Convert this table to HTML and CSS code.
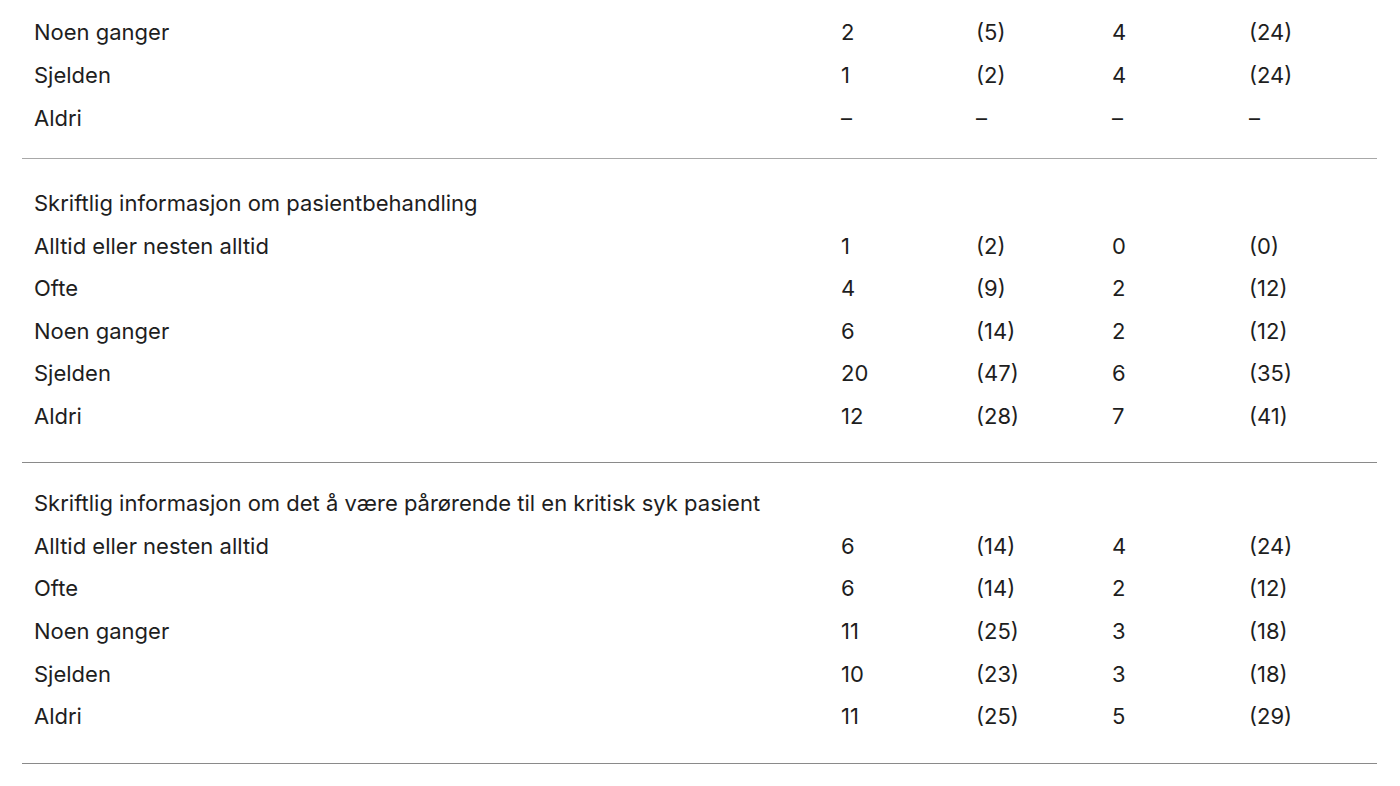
FILE: index.html
```html
<!DOCTYPE html>
<html lang="no">
<head>
<meta charset="utf-8">
<title>Tabell</title>
<link rel="stylesheet" href="styles.css">
</head>
<body>
<div class="table">
  <div class="section section-first">
    <div class="row"><span class="label">Noen ganger</span><span>2</span><span>(5)</span><span>4</span><span>(24)</span></div>
    <div class="row"><span class="label">Sjelden</span><span>1</span><span>(2)</span><span>4</span><span>(24)</span></div>
    <div class="row"><span class="label">Aldri</span><span>–</span><span>–</span><span>–</span><span>–</span></div>
  </div>
  <div class="section">
    <div class="row"><span class="label heading">Skriftlig informasjon om pasientbehandling</span></div>
    <div class="row"><span class="label">Alltid eller nesten alltid</span><span>1</span><span>(2)</span><span>0</span><span>(0)</span></div>
    <div class="row"><span class="label">Ofte</span><span>4</span><span>(9)</span><span>2</span><span>(12)</span></div>
    <div class="row"><span class="label">Noen ganger</span><span>6</span><span>(14)</span><span>2</span><span>(12)</span></div>
    <div class="row"><span class="label">Sjelden</span><span>20</span><span>(47)</span><span>6</span><span>(35)</span></div>
    <div class="row"><span class="label">Aldri</span><span>12</span><span>(28)</span><span>7</span><span>(41)</span></div>
  </div>
  <div class="section section-last">
    <div class="row"><span class="label heading">Skriftlig informasjon om det å være pårørende til en kritisk syk pasient</span></div>
    <div class="row"><span class="label">Alltid eller nesten alltid</span><span>6</span><span>(14)</span><span>4</span><span>(24)</span></div>
    <div class="row"><span class="label">Ofte</span><span>6</span><span>(14)</span><span>2</span><span>(12)</span></div>
    <div class="row"><span class="label">Noen ganger</span><span>11</span><span>(25)</span><span>3</span><span>(18)</span></div>
    <div class="row"><span class="label">Sjelden</span><span>10</span><span>(23)</span><span>3</span><span>(18)</span></div>
    <div class="row"><span class="label">Aldri</span><span>11</span><span>(25)</span><span>5</span><span>(29)</span></div>
  </div>
</div>
</body>
</html>
```
FILE: styles.css
```css
html, body {
  margin: 0;
  padding: 0;
  background: #ffffff;
}
body {
  font-family: Inter, "Noto Sans", "Liberation Sans", sans-serif;
  font-size: 22px;
  color: #1e1e1e;
  overflow: hidden;
}
.table {
  margin-left: 22px;
  width: 1355px;
}
.section {
  padding: 23.2px 0 24px;
  border-bottom: 1px solid #8a8a8a;
}
.section-first {
  padding-top: 11.2px;
  padding-bottom: 18.5px;
  border-bottom-color: #a8a8a8;
}
.section-last {
  padding-top: 19.2px;
  padding-bottom: 25.5px;
}
.row {
  display: grid;
  grid-template-columns: 807px 135px 136px 137px 1fr;
  height: 42.67px;
  line-height: 42.67px;
  white-space: nowrap;
}
.row span {
  padding-left: 12px;
}
.heading {
  grid-column: 1 / -1;
}
```
